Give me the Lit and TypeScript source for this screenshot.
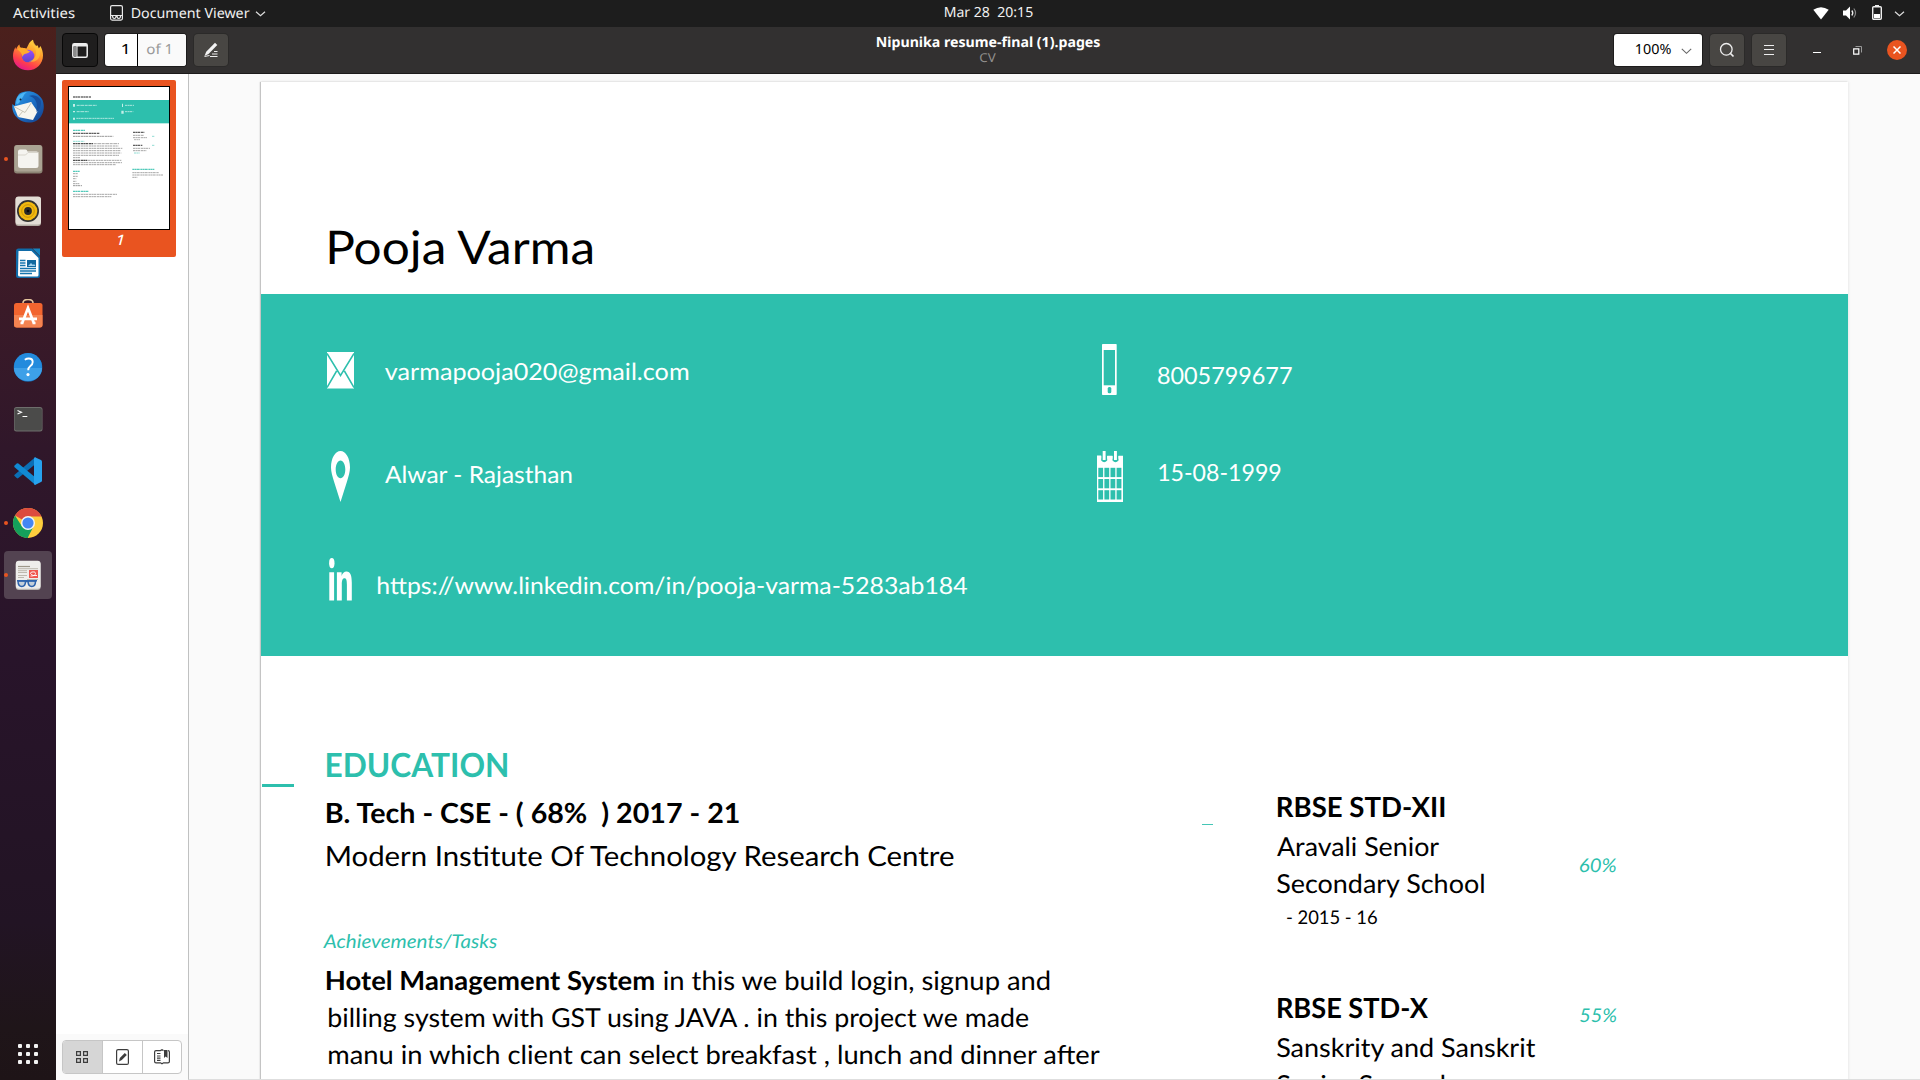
import { LitElement, html, css, svg, nothing, TemplateResult } from "lit";
import { customElement, property } from "lit/decorators.js";
import { styleMap } from "lit/directives/style-map.js";

const CAP = 0.72;
const ctx = document.createElement("canvas").getContext("2d")!;

/* One line of text whose ink fills a box: width in px, height = cap height. */
@customElement("fit-text")
export class FitText extends LitElement {
  static styles = css`
    :host { display: block; flex: none; white-space: pre; }
    .ink { display: inline-block; vertical-align: top; transform-origin: 0 0; white-space: pre; text-rendering: geometricPrecision; }
  `;
  @property() text = "";
  @property({ type: Number }) w = 100;
  @property({ type: Number }) h = 10;
  @property() weight = "400";
  @property() slant = "normal";
  @property() family = "Lato";

  render() {
    const size = this.h / CAP;
    /* Measured at ten times the size, so that rounding does not matter. */
    ctx.font = `${this.slant} ${this.weight} ${size * 10}px "${this.family}", sans-serif`;
    const m = ctx.measureText(this.text);
    const left = m.actualBoundingBoxLeft / 10;
    const scale = this.w / (left + m.actualBoundingBoxRight / 10);
    const drop = this.family === "Lato" ? 0.012 : -0.03;
    const box = { width: `${this.w}px`, height: `${this.h}px`, display: "block" };
    const ink = {
      fontFamily: `"${this.family}", sans-serif`,
      fontSize: `${size}px`,
      fontWeight: this.weight,
      fontStyle: this.slant,
      lineHeight: `${this.h}px`,
      transform: `scaleX(${scale}) translate(${left}px, ${drop}em)`,
    };
    return html`<span style=${styleMap(box)}><span class="ink" style=${styleMap(ink)}>${this.text}</span></span>`;
  }
}

interface Line { text: string; w: number; h: number; gap: number; indent?: number; weight?: string; slant?: string; teal?: boolean; tail?: { text: string; w: number; gap: number } }

const fit = (text: string, w: number, h: number, weight = "400", slant = "normal", family = "Lato") =>
  html`<fit-text .text=${text} .w=${w} .h=${h} .weight=${weight} .slant=${slant} .family=${family}></fit-text>`;
const ui = (text: string, w: number, h: number, weight = "400", slant = "normal") => fit(text, w, h, weight, slant, "Noto Sans");

const education: Line[] = [
  { text: "EDUCATION", w: 180.4, h: 24, gap: 97.3, indent: 0.3, weight: "700", teal: true },
  { text: "B. Tech - CSE - ( 68%  ) 2017 - 21", w: 413, h: 20, gap: 25.7, weight: "700" },
  { text: "Modern Institute Of Technology Research Centre", w: 629, h: 20, gap: 23 },
  { text: "Achievements/Tasks", w: 174, h: 13.6, gap: 69.4, indent: -4, slant: "italic", teal: true },
  { text: "Hotel Management System", w: 327.3, h: 19, gap: 22.3, weight: "700", tail: { text: "in this we build login, signup and", w: 386.3, gap: 9.4 } },
  { text: "billing system with GST using JAVA . in this project we made", w: 703, h: 18.8, gap: 18.2, indent: 2.3 },
  { text: "manu in which client can select breakfast , lunch and dinner after", w: 771.7, h: 18.8, gap: 17.7, indent: 2.3 },
];
const schools: Line[] = [
  { text: "RBSE STD-XII", w: 166.3, h: 20, gap: 141.3, indent: 0.7, weight: "700" },
  { text: "Aravali Senior", w: 162, h: 18.8, gap: 19.9 },
  { text: "Secondary School", w: 207.5, h: 18.8, gap: 18.2 },
  { text: "- 2015 - 16", w: 90, h: 13.6, gap: 18.4, indent: 10 },
  { text: "RBSE STD-X", w: 150, h: 20, gap: 73, indent: 0.7, weight: "700" },
  { text: "Sanskrity and Sanskrit", w: 259, h: 18.8, gap: 20.2 },
  { text: "Senior Secondary", w: 207, h: 18.8, gap: 18.2 },
];
const scores: Line[] = [
  { text: "60%", w: 36, h: 13.6, gap: 203.4, slant: "italic", teal: true },
  { text: "55%", w: 36.3, h: 13.6, gap: 136.4, indent: 0.8, slant: "italic", teal: true },
];

const mail = html`<svg width="27" height="37" viewBox="0 0 27 37"><rect width="27" height="36.500" fill="#fff"/><path d="M0 1.500 13.500 23.500 27 1.500M0 35.500 9.600 19M27 35.500 17.400 19" fill="none" stroke="#2dbfad" stroke-width="1.500"/></svg>`;
const pin = html`<svg width="19" height="51" viewBox="0 0 19 51"><path fill="#fff" fill-rule="evenodd" d="M9.500 0C4.300 0 0 7 0 16.500c0 4 1.500 9 3 14L9.500 51 16 30.500c1.500-5 3-10 3-14C19 7 14.700 0 9.500 0zm0 9.500c2.700 0 4.800 4 4.800 9s-2.100 8.700-4.800 8.700-4.800-3.700-4.800-8.700 2.100-9 4.800-9z"/></svg>`;
const linkedin = html`<svg width="23" height="43" viewBox="0 0 23 43"><ellipse cx="2.800" cy="5.200" rx="2.700" ry="5.100" fill="#fff"/><path fill="#fff" d="M.3 14.200h4.800V42.500H.3zM7.900 14.200h4.700v3.900c.9-3 2.600-4.600 4.900-4.600 4 0 5.300 4.200 5.300 11.200v17.800h-4.900V26.800c0-4.200-.4-6.600-2.400-6.600-2.100 0-2.700 2.600-2.700 6.400v15.900H7.900z"/></svg>`;
const mobile = html`<svg width="15" height="51" viewBox="0 0 15 51"><rect width="14.700" height="51" rx=".7" fill="#fff"/><rect x="1.700" y="6" width="11.300" height="35.300" fill="#2dbfad"/><rect x="5.700" y="43" width="3.600" height="6.300" rx="1.500" fill="#2dbfad"/></svg>`;
const calendar = html`<svg width="26" height="51" viewBox="0 0 26 51"><path d="M0 5h26v46H0z" fill="#fff"/><g fill="#2dbfad">${[0, 1, 2].map((r) => [0, 1, 2, 3].map((c) => svg`<rect x=${1.3 + c * 6.1} y=${16.8 + r * 11.2} width="4.800" height="9.300"/>`))}<path d="M4.200 3h6v6.500q-3 3.500-6 0zM15.500 3h6v6.500q-3 3.500-6 0z"/></g><path d="M0 4.500h4.200v3H0zM10.200 4.800h5.300v3h-5.300zM21.500 4.800H26v3h-4.500zM5.700 0h2.900v9H5.700zM17 0h2.900v9H17z" fill="#fff"/></svg>`;

const contacts: { icon: TemplateResult; iw: number; dx: number; iy: number; text: string; tx: number; ty: number; w: number; side: string }[] = [
  { icon: mail, iw: 27, dx: 0, iy: 57.7, text: "varmapooja020@gmail.com", tx: 57.7, ty: 70.3, w: 303, side: "left" },
  { icon: mobile, iw: 15, dx: 5.3, iy: 50, text: "8005799677", tx: 60.7, ty: 74.3, w: 133.6, side: "right" },
  { icon: pin, iw: 19, dx: 4, iy: 21, text: "Alwar - Rajasthan", tx: 57.7, ty: 37, w: 187, side: "left" },
  { icon: calendar, iw: 26, dx: 0, iy: 21, text: "15-08-1999", tx: 62, ty: 35.3, w: 121.4, side: "right" },
  { icon: linkedin, iw: 23, dx: 2, iy: 17.7, text: "https://www.linkedin.com/in/pooja-varma-5283ab184", tx: 50.5, ty: 38, w: 589, side: "left" },
];

const firefox = html`<svg width="32" height="32" viewBox="0 0 32 32"><defs><linearGradient id="a" x1=".8" y1="0" x2=".3" y2="1"><stop offset="0" stop-color="#ffe14a"/><stop offset=".4" stop-color="#ff9a2a"/><stop offset=".75" stop-color="#ff3f4c"/><stop offset="1" stop-color="#e3178f"/></linearGradient><linearGradient id="b" x1="0" y1="0" x2="0" y2="1"><stop offset="0" stop-color="#9a4bff"/><stop offset="1" stop-color="#5b47c9"/></linearGradient></defs><path fill="url(#a)" d="M17 4.500C18.500 2.500 20 1.200 21 .8c-.2 3 1.200 4.500 3 6.200l1.500-.8c.5 1 1 2.200 1.300 3.300l1.700-2.500c1.700 3.500 2.500 6 2.500 9.500 0 8.300-6.500 14.800-15 14.800S1 25.500 1 17c0-3.500 1-6.500 2.500-9 0 1 .2 1.700.6 2.300C5 8 6 6.500 7.500 5.500c0 2 .6 2.800 2 3.500 2 0 3.500-.5 5 .5z"/><circle cx="16" cy="17" r="6.300" fill="url(#b)"/><path fill="#ffab2e" d="M5 10c3-2 7-1.500 9.500.5 1 .8 1.500 1.500 3.500 1.500-.8 2-3 2.300-4.500 2.800-2 .7-2.500 1.700-3 3.200-.5-3-2-5.500-5.500-8z"/><path fill="#ffc63a" d="M17 4.500c4 1 7 4.500 7 9 0 5-3.500 8.500-7.500 8.700 9 2.500 14-5 10.300-12.700C25 8 22 5 21 .8z" opacity=".65"/></svg>`;
const thunderbird = html`<svg width="34" height="34" viewBox="0 0 34 34"><defs><linearGradient id="t" x1="0" y1="0" x2="1" y2="1"><stop offset="0" stop-color="#2fa4ec"/><stop offset=".5" stop-color="#1c6fc6"/><stop offset="1" stop-color="#123c87"/></linearGradient></defs><path fill="url(#t)" d="M8 4C15-1 26 1 31 9c4 8 1 18-6 22-4 2-9 2-13 .5C5 29 0 22 1.500 14c1 1 2 1.500 2.500 1.500C4 10 6 7 8 4z"/><path fill="#f7f5ee" d="m3 16.500 17-4.500 6.500 9.500L22 30 7 27z"/><path d="m3 16.500 11 6 6.500-10M7 27l5-6" fill="none" stroke="#c9c5b7" stroke-width="1"/><path fill="#174f9e" d="M18 6c5 1 8 5 8 10l-.5 6c3-2 5-6 4.500-11C28 6 23 4 18 6z"/><path fill="#4cb6f5" d="M6 8c1.500-3 6-5.500 10-6-2 1.500-3 2.500-3.500 4L8 13c-1.500 1.500-2.700 1-3 0z"/><circle cx="9.500" cy="9.500" r="1" fill="#123"/></svg>`;
const files = html`<svg width="32" height="32" viewBox="0 0 32 32"><rect x="2" y="2" width="28.500" height="28.500" rx="3" fill="#8c8474"/><rect x="2.500" y="2" width="27.500" height="26.500" rx="3" fill="#aaa393"/><path fill="#f5f4f0" d="M6 8.500q0-2 2-2h5.500q1.500 0 2 2h9q2 0 2 2v12q0 2.500-2.500 2.500H8.500q-2.500 0-2.500-2.500z"/><path d="M6 12h7.500l2.500-2.500h10.500" fill="none" stroke="#d8d5cc"/></svg>`;
const rhythm = html`<svg width="32" height="32" viewBox="0 0 32 32"><rect x="3.500" y="2" width="25.500" height="29" rx="3" fill="#b4ada4"/><rect x="3.500" y="1.500" width="25.500" height="28" rx="3" fill="#e3ddd5"/><circle cx="16" cy="16" r="11" fill="#323232"/><circle cx="16" cy="16" r="9.300" fill="#f2b90f"/><circle cx="16" cy="16" r="6.300" fill="none" stroke="#c9940a"/><circle cx="16" cy="16" r="3.900" fill="#292929"/><circle cx="16" cy="16" r="1.300" fill="#090909"/></svg>`;
const writer = html`<svg width="32" height="32" viewBox="0 0 32 32"><path fill="#0f6ba8" d="M4 4q0-2.500 2.500-2.500H20l8 8V29q0 2-2 2H6q-2 0-2-2z"/><path fill="#fff" d="M6.500 4h13l7 7v17q0 1.500-1.500 1.500H8Q6 29.500 6 28z"/><path fill="#1683bf" d="M20.500 1.500H28V9z"/><path fill="#12689f" d="M15 13h9v7h-9z"/><path fill="#9fd0ee" d="m16 19 3-3 2 2 1-1 1.500 2z"/><path d="M8 13.500h5.500M8 16h5.500M8 18.500h5.500M8 21.500h16M8 24h16M8 26.500h12" stroke="#1676ae" stroke-width="1.300"/></svg>`;
const software = html`<svg width="32" height="32" viewBox="0 0 32 32"><path d="M11 6V4q0-3.500 5-3.500T21 4v2" fill="none" stroke="#e7c79e" stroke-width="1.500"/><rect x="2" y="4" width="28.500" height="24.500" rx="2.500" fill="#f2652f"/><path fill="#f48351" d="M2 16h28.500v9.500q0 3-3 3H5q-3 0-3-3z"/><path d="M10.200 24 16 9l5.800 15M7 19.800h18M8.500 24h3M20.500 24h3" stroke="#fff" stroke-width="2.700" fill="none"/></svg>`;
const help = html`<svg width="32" height="32" viewBox="0 0 32 32"><circle cx="16" cy="16.500" r="14.300" fill="#1969ae"/><circle cx="16" cy="16" r="14" fill="#238bdd"/><path d="M2 17h28a14 13 0 0 1-28 0z" fill="#3da0e8"/><path d="M12.800 8.800q1.900-1.300 4-1.300 3.900 0 3.900 3.500 0 2.200-2.300 4-2.200 1.800-2.200 4.200" fill="none" stroke="#fff" stroke-width="1.900"/><circle cx="16" cy="23.600" r="1.600" fill="#fff"/></svg>`;
const terminal = html`<svg width="32" height="32" viewBox="0 0 32 32"><rect x="2" y="4" width="28.500" height="24.500" rx="2.500" fill="#6e6e6c"/><rect x="2.600" y="5" width="27.300" height="22.500" rx="2" fill="#4b4b4a"/><path d="m5.500 7.500 4 1.800-4 1.800M10.500 13.500h4.800" fill="none" stroke="#fff" stroke-width="1.100"/></svg>`;
const vscode = html`<svg width="32" height="32" viewBox="0 0 32 32"><path fill="#0b6fb5" d="m2.300 20.700 2.400 2.400q.8.600 1.700 0L23.500 9V2L2.300 20z"/><path fill="#118ad3" d="m2.300 10.800 2.400-2.200q.9-.6 1.700 0L23.500 22.500V30L2.300 12z"/><path fill="#27a2ee" d="M23 2.200 29 5q1 .5 1 1.500v19q0 1-1 1.500l-6 3q-1-.3-1-1.500v-25q0-1 1-1.300z"/></svg>`;
const chrome = html`<svg width="32" height="32" viewBox="0 0 32 32"><circle cx="16" cy="16" r="15" fill="#fecd3d"/><path fill="#dd4b3e" d="M16 16 3 8.500A15 15 0 0 1 29.500 9.500H16z"/><path fill="#14a05b" d="M16 16v6.500L16 31A15 15 0 0 1 3 8.500l7 11z"/><path fill="#14a05b" d="m21.600 19.300-6 11.700H14l-3-9z"/><circle cx="16" cy="16" r="7" fill="#f4f4f4"/><circle cx="16" cy="16" r="5.600" fill="#4486f4"/></svg>`;
const evince = html`<svg width="32" height="32" viewBox="0 0 32 32"><rect x="3.800" y="2.500" width="24.800" height="28.500" rx="3" fill="#b8b4b0"/><rect x="3.800" y="1.800" width="24.800" height="28" rx="3" fill="#eeedeb"/><path d="M6 7.500h12" stroke="#9d9789" stroke-width="1.200"/><path d="M6 9.700h20M6 11.700h9M6 13.500h9M6 16.500h9M6 18.500h6M15 20.500h11" stroke="#bdb8ae" stroke-width="1"/><rect x="17" y="11" width="9" height="8" fill="#f0564d"/><path d="M18.500 17q5 0 5-2.500T20 13t1 3.500h4" fill="none" stroke="#fff" stroke-width=".9"/><g fill="#c4cfda" stroke="#2f64ad" stroke-width="1.500"><path d="M6 22h7.500q0 5.500-3.700 5.500T6 22zM16 22h7.500q0 5.500-3.700 5.500T16 22z"/></g><path d="M5 21.800h20M13 22.500h4" stroke="#2f64ad" stroke-width="1.600"/></svg>`;

const dock: { icon: TemplateResult; running?: boolean; active?: boolean }[] = [
  { icon: firefox }, { icon: thunderbird }, { icon: files, running: true }, { icon: rhythm }, { icon: writer }, { icon: software },
  { icon: help }, { icon: terminal }, { icon: vscode }, { icon: chrome, running: true }, { icon: evince, running: true, active: true },
];

/* Miniature rows of the page preview: x, y, length, colour, thickness. */
const mini: [number, number, number, string, number][] = [
  [219, 291, 54, "#555", 5], [230, 316, 60, "#c3eee8", 3], [375, 316, 27, "#c3eee8", 3], [230, 335, 37, "#c3eee8", 3], [375, 335, 25, "#c3eee8", 3], [229, 355, 113, "#c3eee8", 3],
  [219, 391, 36, "#36c1b0", 4], [219, 400, 79, "#444", 4], [219, 409, 121, "#888", 3], [219, 424, 34, "#7fd8cd", 3],
  [219, 431, 60, "#333", 4], [281, 431, 76, "#999", 3], [219, 438, 136, "#999", 3], [219, 445, 148, "#999", 3], [219, 452, 142, "#999", 3], [219, 459, 145, "#999", 3], [219, 466, 138, "#999", 3], [219, 473, 21, "#999", 3],
  [219, 481, 43, "#333", 4], [264, 481, 100, "#999", 3], [219, 488, 147, "#999", 3], [219, 494, 129, "#999", 3],
  [219, 514, 20, "#36c1b0", 4], [219, 521, 15, "#999", 3], [219, 529, 15, "#999", 3], [219, 536, 10, "#999", 3], [219, 544, 10, "#999", 3], [219, 551, 19, "#999", 3], [219, 557, 27, "#888", 3],
  [219, 574, 46, "#36c1b0", 4], [219, 583, 133, "#999", 3], [219, 590, 115, "#999", 3],
  [399, 397, 34, "#444", 4], [399, 406, 33, "#999", 3], [399, 413, 42, "#999", 3], [402, 419, 18, "#aaa", 3], [456, 409, 7, "#7fd8cd", 3],
  [399, 436, 28, "#444", 4], [399, 445, 51, "#999", 3], [399, 452, 40, "#999", 3], [402, 459, 17, "#7fd8cd", 3], [456, 436, 7, "#7fd8cd", 3],
  [397, 508, 66, "#36c1b0", 4], [397, 518, 80, "#999", 3], [397, 525, 92, "#999", 3], [397, 532, 15, "#999", 3],
];

@customElement("app-root")
export class AppRoot extends LitElement {
  static styles = css`
    :host { display: block; width: 1920px; height: 1080px; overflow: hidden; font-family: "Noto Sans", sans-serif; }
    * { box-sizing: border-box; }
    svg { display: block; flex: none; }
    .screen { width: 1920px; height: 1080px; display: grid; grid-template: 27px 1053px / 56px 1864px; overflow: hidden; }
    .top { grid-column: 1 / 3; background: #1d1d1d; color: #f0f0f0; display: grid; grid-template-columns: 945px 1fr auto; padding: 0 15px 0 0; }
    .top-left { display: flex; padding: 8.700px 0 0 12.500px; }
    .app-ico { margin: -4px 8.500px 0 36px; }
    .chev { margin: 2.300px 0 0 6px; }
    .clock { padding-top: 8.300px; }
    .tray { display: flex; align-items: flex-start; padding-top: 5px; }
    .wifi { margin-right: 1px; }
    .vol { margin-left: 11.500px; } .bat { margin-left: 14px; } .down { margin: 5.500px 0 0 12.500px; }

    .dock { background: linear-gradient(180deg, #4b201c 0%, #3e1b27 22%, #30172a 40%, #28142a 60%, #221424 85%, #1f1519 95%, #1e1417 100%); display: flex; flex-direction: column; padding-top: 2px; }
    .app { height: 52px; display: flex; align-items: center; position: relative; justify-content: center; }
    .tile { width: 48px; height: 48px; border-radius: 4px; display: flex; align-items: center; justify-content: center; }
    .tile.active { background: #534351; }
    .dot { position: absolute; left: 4px; top: 24px; width: 4px; height: 4px; border-radius: 50%; background: #e95420; }
    .grid9 { margin: auto 0 16px 18px; display: grid; grid-template-columns: repeat(3, 4px); gap: 4px; }
    .grid9 i { width: 4px; height: 4px; border-radius: 1px; background: #f2f2f2; }

    .window { display: grid; grid-template: 47px 1006px / 132px 1732px; min-width: 0; }
    .head { grid-column: 1 / 3; background: #323030; border-bottom: 1px solid #1c1b1b; display: flex; align-items: flex-start; padding: 6px 13px 0 6px; }
    .toggle { width: 36px; height: 34px; background: #1f1e1e; border: 1px solid #080808; border-radius: 4px; display: grid; place-items: center; }
    .entry { margin: 1px 0 0 7px; width: 81px; height: 32px; background: #fff; border-radius: 3px; display: flex; overflow: hidden; box-shadow: 0 0 0 1px #1d1c1c; color: #000; }
    .num { width: 33px; border-right: 1px solid #000; padding: 11.400px 0 0 17.300px; }
    .of { flex: 1; background: #fafafa; color: #999; padding: 11.400px 0 0 8.700px; }
    .btn { width: 34px; height: 32px; background: #484643; border-radius: 4px; display: grid; place-items: center; margin-top: 1px; box-shadow: 0 0 0 1px #2b2a29; }
    .edit { margin-left: 8px; }
    .title { margin: 5px 0 0 648.500px; width: 223px; color: #fff; }
    .sub { color: #918f8d; padding: 6.300px 0 0 103.600px; }
    .zoom { margin: 1px 0 0 auto; width: 88px; height: 32px; background: #fff; border-radius: 3px; box-shadow: 0 0 0 1px #1d1c1c; color: #000; display: flex; padding: 11.400px 0 0 22px; }
    .zoom svg { margin: 2.500px 0 0 10.500px; }
    .gap { margin-left: 8px; }
    .min { margin: 18.500px 0 0 27px; width: 8px; height: 1.300px; background: #fff; }
    .restore { margin: 12.500px 0 0 32px; }
    .close { margin: 7px 0 0 25px; width: 20px; height: 20px; border-radius: 50%; background: #e95420; display: grid; place-items: center; }

    .side { background: #fff; display: flex; flex-direction: column; padding-top: 6px; }
    .thumb { margin-left: 6px; width: 114px; height: 177px; border-radius: 2px; background: #e95420; padding: 6px; color: #fff; }
    .preview { width: 102px; height: 144px; background: #fff; border: 1px solid #000; }
    .pageno { padding: 6px 0 0 49.500px; }
    .tools { margin-top: auto; height: 46px; background: #fafafa; padding: 6px; }
    .seg { width: 120px; height: 34px; border: 1px solid #c6c6c6; border-radius: 4px; display: grid; grid-template-columns: 40px 40px 38px; overflow: hidden; background: #fff; }
    .seg div { display: grid; place-items: center; border-right: 1px solid #c6c6c6; padding-right: 1px; }
    .seg div:first-child { background: #d6d6d6; }
    .seg div:last-child { border-right: 0; }

    .view { background: #fafafa; border-left: 1px solid #c0c1c1; border-bottom: 1px solid #dedede; padding: 8px 0 0 72px; overflow: hidden; }
    .page { width: 1586.500px; height: 1200px; background: #fff; color: #000; box-shadow: -1px 0 1px #c4c4c4, 0 0 3px #dcdcdc; }
    .name { height: 212px; padding: 147.400px 0 0 68px; }
    .band { height: 362px; background: #2dbfad; color: #fff; display: grid; grid-template: 136px 110px 116px / 836px 1fr; }
    .contact { display: flex; align-items: flex-start; }
    .left { padding-left: 66px; }
    .body { display: grid; grid-template-columns: 66px 875px 75px 302.700px 1fr; }
    .rule { margin: 127.700px 0 0 1.300px; width: 31.500px; height: 3px; background: #2dbfad; }
    .dash { margin-top: 168px; width: 10.500px; height: 1px; background: #45c6b6; }
    .line { display: flex; }
    .teal { color: #2dbfad; }
  `;

  private lines(rows: Line[]) {
    return rows.map((l) => html`<div class="line ${l.teal ? "teal" : ""}" style=${styleMap({ marginTop: `${l.gap}px`, marginLeft: `${l.indent ?? 0}px` })}>
      ${fit(l.text, l.w, l.h, l.weight, l.slant)}
      ${l.tail ? html`<div style=${styleMap({ marginLeft: `${l.tail.gap}px` })}>${fit(l.tail.text, l.tail.w, l.h)}</div>` : nothing}
    </div>`);
  }

  private topBar() {
    return html`<div class="top">
      <div class="top-left">
        ${ui("Activities", 61.5, 10)}
        <svg class="app-ico" width="13" height="16" viewBox="0 0 13 16"><rect x=".6" y=".6" width="11.800" height="14.500" rx="1.500" fill="none" stroke="#e8e8e8" stroke-width="1.200"/><path d="M1 10.500h11M2.500 10.500q0 3 1.800 3t1.700-3M7 10.500q0 3 1.800 3t1.700-3" fill="none" stroke="#e8e8e8" stroke-width="1.200"/></svg>
        ${ui("Document Viewer", 117.5, 10)}
        <svg class="chev" width="11" height="6" viewBox="0 0 11 6"><path d="m1 .8 4.500 4 4.500-4" fill="none" stroke="#ddd" stroke-width="1.200"/></svg>
      </div>
      <div class="clock">${ui("Mar 28  20:15", 87.5, 10)}</div>
      <div class="tray">
        <svg class="wifi" width="16" height="16" viewBox="0 0 16 16"><path d="M.3 4.800Q8-.5 15.700 4.800L8 14.500z" fill="#fff"/></svg>
        <svg class="vol" width="16" height="16" viewBox="0 0 16 16"><path d="M1 5.500h3l4-4v13l-4-4H1z" fill="#fff"/><path d="M9.800 5.500q2 2.500 0 5" fill="none" stroke="#eee" stroke-width="1.300"/><path d="M11.800 3.500q3.500 4.500 0 9" fill="none" stroke="#888" stroke-width="1.200"/></svg>
        <svg class="bat" width="10" height="16" viewBox="0 0 10 16"><path d="M3 0h4v2H3z" fill="#eee"/><rect x=".7" y="1.700" width="8.600" height="12.600" rx="1" fill="none" stroke="#eee" stroke-width="1.400"/><path d="M2 9h6v4H2z" fill="#fff"/></svg>
        <svg class="down" width="11" height="6" viewBox="0 0 11 6"><path d="m1 .8 4.500 4 4.500-4" fill="none" stroke="#ddd" stroke-width="1.200"/></svg>
      </div>
    </div>`;
  }

  private head() {
    return html`<div class="head">
      <div class="toggle"><svg width="16" height="15" viewBox="0 0 16 15"><rect x=".8" y=".8" width="14.400" height="13.400" rx="1.500" fill="none" stroke="#eee" stroke-width="1.500"/><path d="M1 1h14v2.500H1z" fill="#eee"/><path d="M1.500 3.500h3v10h-3z" fill="#8b8b8b"/><path d="M5 3v11" stroke="#eee"/></svg></div>
      <div class="entry"><div class="num">${ui("1", 5, 10)}</div><div class="of">${ui("of 1", 23, 10)}</div></div>
      <div class="btn edit"><svg width="16" height="16" viewBox="0 0 16 16"><path d="M12 .8 14.300 3 5.500 12 1.500 14l1.700-4.300z" fill="#f3f3f3"/><path d="m1.500 14.500 5-1" stroke="#eee" stroke-width="1"/><path d="M11 9.500h3.500M9 12h5.500M7 14.500h7.500" stroke="#eee" stroke-width="1.200"/></svg></div>
      <div class="title">${ui("Nipunika resume-final (1).pages", 223, 10, "700")}<div class="sub">${ui("CV", 15.7, 8.8)}</div></div>
      <div class="zoom">${ui("100%", 34.7, 10)}<svg width="11" height="7" viewBox="0 0 11 7"><path d="m.8 .8 4.700 4.500L10.200.8" fill="none" stroke="#666" stroke-width="1.100"/></svg></div>
      <div class="btn gap"><svg width="16" height="16" viewBox="0 0 16 16"><circle cx="7.300" cy="7.300" r="5.800" fill="none" stroke="#eee" stroke-width="1.300"/><path d="m11 11 3.500 3.500" stroke="#eee" stroke-width="1.700"/></svg></div>
      <div class="btn gap"><svg width="10" height="10" viewBox="0 0 10 10"><path d="M0 .5h10M0 4.500h10M0 9.500h10" stroke="#eee" stroke-width="1"/></svg></div>
      <div class="min"></div>
      <svg class="restore" width="9" height="9" viewBox="0 0 9 9"><path d="M2.500.5h6v6" fill="none" stroke="#999"/><path d="M.7 2.900h5.100v5.300H.7z" fill="none" stroke="#fff" stroke-width="1.200"/></svg>
      <div class="close"><svg width="8" height="8" viewBox="0 0 8 8"><path d="m.5.5 7 7m0-7-7 7" stroke="#fff" stroke-width="1.500"/></svg></div>
    </div>`;
  }

  private side() {
    return html`<div class="side">
      <div class="thumb">
        <div class="preview"><svg width="100" height="142" viewBox="207 261 300 426">
          <rect x="207" y="300" width="300" height="70" fill="#2dbfad"/>
          <path d="M219 312h6v8h-6zM219 333h6v4h-6zM219 353h6v6h-6zM366 311h3v10h-3zM364 332h7v9h-7z" fill="#c3eee8"/>
          ${mini.map(([x, y, w, c, t]) => svg`<line x1=${x} x2=${x + w} y1=${y} y2=${y} stroke=${c} stroke-width=${t} stroke-dasharray="7 1 4 1 9 2" opacity=".85"/>`)}
        </svg></div>
        <div class="pageno">${ui("1", 5.5, 10.3, "400", "italic")}</div>
      </div>
      <div class="tools"><div class="seg">
        <div><svg width="12" height="12" viewBox="0 0 12 12"><path d="M.6.600h3.800v3.800H.6zM7.600.6h3.800v3.800H7.600zM.6 7.600h3.800v3.800H.6zM7.600 7.600h3.800v3.800H7.600z" fill="none" stroke="#3d3d3d" stroke-width="1.200"/></svg></div>
        <div><svg width="13" height="16" viewBox="0 0 13 16"><rect x=".6" y=".6" width="11.800" height="14.800" rx="1.500" fill="none" stroke="#3d3d3d" stroke-width="1.200"/><path d="m8.800 4 2 2-5 5L3 12.500 3.800 9z" fill="#3d3d3d"/></svg></div>
        <div><svg width="16" height="16" viewBox="0 0 16 16"><path d="M6.500 1.600H2Q.6 1.600.6 3v9.500q0 1.300 1.400 1.300h4.500l1.500 1 1.500-1H14q1.400 0 1.400-1.300V3q0-1.400-1.400-1.400M6.500 1.600 8 .8l1.500.8" fill="none" stroke="#3d3d3d" stroke-width="1.200"/><path d="M3 4.500h3.500M3 7h3.500M3 9.200h3.500M3 11.400h3.500" stroke="#3d3d3d" stroke-width="1.200"/><path d="M10 1h3.500v8L11.700 7.500 10 9z" fill="#3d3d3d"/></svg></div>
      </div></div>
    </div>`;
  }

  render() {
    return html`<div class="screen">
      ${this.topBar()}
      <div class="dock">
        ${dock.map((d) => html`<div class="app"><div class="tile ${d.active ? "active" : ""}">${d.icon}</div>${d.running ? html`<span class="dot"></span>` : nothing}</div>`)}
        <div class="grid9">${Array.from({ length: 9 }, () => html`<i></i>`)}</div>
      </div>
      <div class="window">
        ${this.head()}
        ${this.side()}
        <div class="view"><div class="page">
          <div class="name">${fit("Pooja Varma", 265, 33.3)}</div>
          <div class="band">
            ${contacts.map((c) => html`<div class="contact ${c.side}">
              <div style=${styleMap({ marginLeft: `${c.dx}px`, marginTop: `${c.iy}px`, width: `${c.tx - c.dx}px` })}>${c.icon}</div>
              <div style=${styleMap({ marginTop: `${c.ty}px` })}>${fit(c.text, c.w, 17)}</div>
            </div>`)}
          </div>
          <div class="body">
            <div><div class="rule"></div></div>
            <div>${this.lines(education)}</div>
            <div><div class="dash"></div></div>
            <div>${this.lines(schools)}</div>
            <div>${this.lines(scores)}</div>
          </div>
        </div></div>
      </div>
    </div>`;
  }
}
